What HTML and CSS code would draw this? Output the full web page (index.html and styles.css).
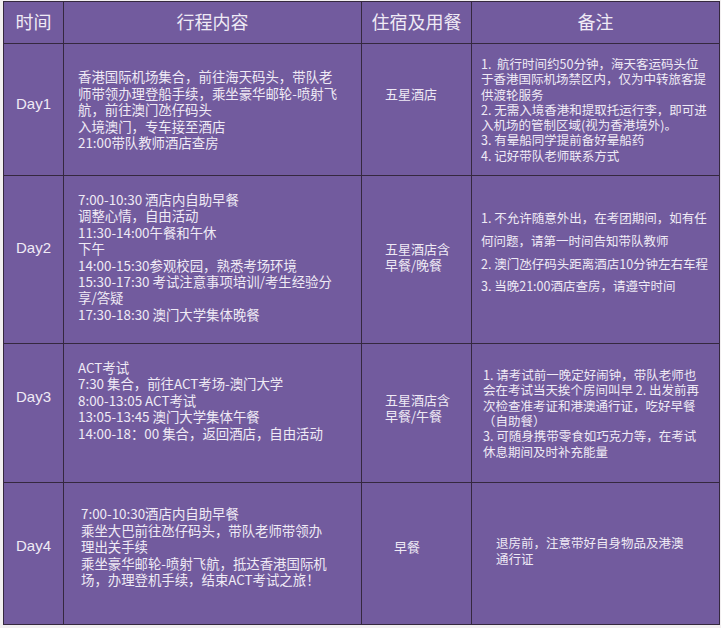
FILE: index.html
```html
<!DOCTYPE html>
<html lang="zh">
<head>
<meta charset="utf-8">
<title>行程</title>
<link rel="stylesheet" href="styles.css">
</head>
<body>
<table class="plan">
  <colgroup>
    <col class="c-time">
    <col class="c-trip">
    <col class="c-stay">
    <col class="c-note">
  </colgroup>
  <thead>
    <tr class="head">
      <th>时间</th>
      <th>行程内容</th>
      <th>住宿及用餐</th>
      <th>备注</th>
    </tr>
  </thead>
  <tbody>
    <tr class="r1">
      <td class="day">Day1</td>
      <td class="trip">香港国际机场集合，前往海天码头，带队老<br>师带领办理登船手续，乘坐豪华邮轮-喷射飞<br>航，前往澳门氹仔码头<br>入境澳门，专车接至酒店<br>21:00带队教师酒店查房</td>
      <td class="stay">五星酒店</td>
      <td class="note">1.&nbsp; 航行时间约50分钟，海天客运码头位<br>于香港国际机场禁区内，仅为中转旅客提<br>供渡轮服务<br>2. 无需入境香港和提取托运行李，即可进<br>入机场的管制区域(视为香港境外)。<br>3. 有晕船同学提前备好晕船药<br>4. 记好带队老师联系方式</td>
    </tr>
    <tr class="r2">
      <td class="day">Day2</td>
      <td class="trip">7:00-10:30 酒店内自助早餐<br>调整心情，自由活动<br>11:30-14:00午餐和午休<br>下午<br>14:00-15:30参观校园，熟悉考场环境<br>15:30-17:30 考试注意事项培训/考生经验分<br>享/答疑<br>17:30-18:30 澳门大学集体晚餐</td>
      <td class="stay">五星酒店含<br>早餐/晚餐</td>
      <td class="note note-wide">1. 不允许随意外出，在考团期间，如有任<br>何问题，请第一时间告知带队教师<br>2. 澳门氹仔码头距离酒店10分钟左右车程<br>3. 当晚21:00酒店查房，请遵守时间</td>
    </tr>
    <tr class="r3">
      <td class="day">Day3</td>
      <td class="trip">ACT考试<br>7:30 集合，前往ACT考场-澳门大学<br>8:00-13:05 ACT考试<br>13:05-13:45 澳门大学集体午餐<br>14:00-18：00 集合，返回酒店，自由活动</td>
      <td class="stay">五星酒店含<br>早餐/午餐</td>
      <td class="note">1. 请考试前一晚定好闹钟，带队老师也<br>会在考试当天挨个房间叫早 2. 出发前再<br>次检查准考证和港澳通行证，吃好早餐<br>（自助餐）<br>3. 可随身携带零食如巧克力等，在考试<br>休息期间及时补充能量</td>
    </tr>
    <tr class="r4">
      <td class="day">Day4</td>
      <td class="trip trip-in">7:00-10:30酒店内自助早餐<br>乘坐大巴前往氹仔码头，带队老师带领办<br>理出关手续<br>乘坐豪华邮轮-喷射飞航，抵达香港国际机<br>场，办理登机手续，结束ACT考试之旅！</td>
      <td class="stay stay-in">早餐</td>
      <td class="note note-in">退房前，注意带好自身物品及港澳<br>通行证</td>
    </tr>
  </tbody>
</table>
</body>
</html>
```

FILE: styles.css
```css
html, body {
  margin: 0;
  padding: 0;
  background: #f2eff0;
}

body {
  font-family: "Noto Sans CJK SC", "Noto Sans", sans-serif;
  color: #efeaf5;
}

.plan {
  margin: 1px 0 0 3px;
  width: 716px;
  table-layout: fixed;
  border-collapse: collapse;
  background: #725b9e;
  border: 1px solid #35283f;
}

.c-time { width: 60px; }
.c-trip { width: 298px; }
.c-stay { width: 110px; }
.c-note { width: 248px; }

.plan th,
.plan td {
  border: 1px solid #35283f;
  padding: 0;
  vertical-align: middle;
}

.head { height: 42px; }
.head th {
  font-weight: normal;
  font-size: 18px;
  line-height: 20px;
  padding-bottom: 3px;
  text-align: center;
}

.r1 { height: 132px; }
.r2 { height: 168px; }
.r3 { height: 139px; }
.r4 { height: 142px; }

.day {
  font-family: "Liberation Sans", Arial, sans-serif;
  font-size: 15px;
  text-align: center;
  padding-bottom: 12px !important;
}

.r2 .day { padding-bottom: 24px !important; }
.r3 .day { padding-bottom: 34px !important; }
.r4 .day { padding-bottom: 16px !important; }

.trip {
  font-size: 13.4px;
  line-height: 16.4px;
  padding: 0 0 0 14px !important;
  white-space: nowrap;
}

.r2 .trip { padding-bottom: 6px !important; }
.r3 .trip { padding-bottom: 26px !important; }
.trip-in { padding-left: 17px !important; padding-bottom: 14px !important; }

.stay {
  font-size: 13px;
  line-height: 16px;
  padding: 0 0 6px 23px !important;
  white-space: nowrap;
}

.r1 .stay { padding-bottom: 32px !important; }
.r3 .stay { padding-bottom: 10px !important; }
.stay-in { padding-left: 32px !important; padding-bottom: 14px !important; }

.note {
  font-size: 12.5px;
  line-height: 15.3px;
  padding: 0 0 0 9px !important;
  white-space: nowrap;
}

.note-wide {
  line-height: 22.6px;
  padding-bottom: 14px !important;
}

.r3 .note { padding-left: 11px !important; }
.note-in {
  line-height: 16px;
  padding-left: 24px !important;
  padding-bottom: 6px !important;
}
```
